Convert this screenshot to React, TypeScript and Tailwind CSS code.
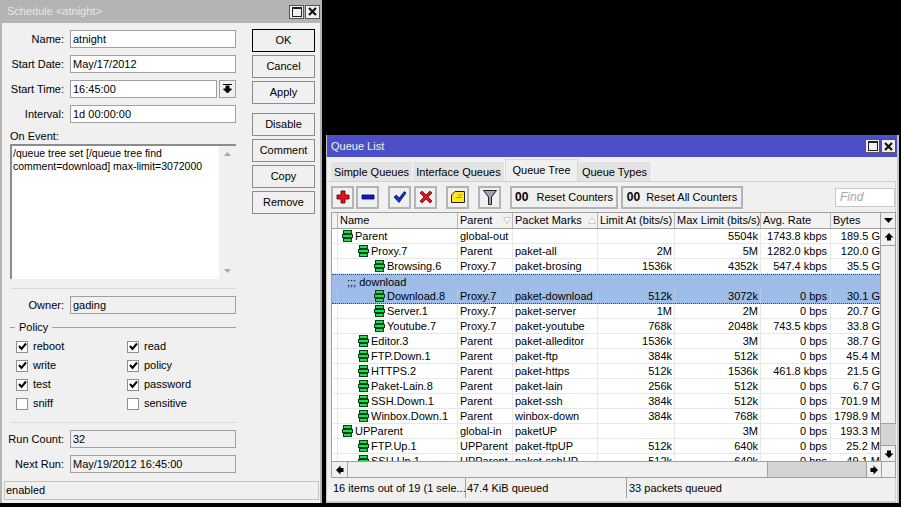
// Winbox-style windows: Schedule dialog on the left, Queue List on the right.
import type { ReactNode } from 'react';

const Arrow = ({ dir }: { dir: 'up' | 'down' | 'left' | 'right' }) => {
  const d = {
    up: 'M5 1 L9.5 5.5 L7 5.5 L7 8.5 L3 8.5 L3 5.5 L.5 5.5 Z',
    down: 'M5 9 L9.5 4.5 L7 4.5 L7 1.5 L3 1.5 L3 4.5 L.5 4.5 Z',
    left: 'M1 5 L5.5 .5 L5.5 3 L8.5 3 L8.5 7 L5.5 7 L5.5 9.5 Z',
    right: 'M9 5 L4.5 .5 L4.5 3 L1.5 3 L1.5 7 L4.5 7 L4.5 9.5 Z',
  }[dir];
  return (
    <svg width="10" height="10" viewBox="0 0 10 10">
      <path d={d} fill="#000" />
    </svg>
  );
};

const WinButtons = () => (
  <div className="flex gap-[1px]">
    <div className="w-[15px] h-[14px] bg-[#f0f0f0] border border-[#555] flex items-center justify-center">
      <div className="w-[10px] h-[10px] border border-[#222] border-t-2" />
    </div>
    <div className="w-[15px] h-[14px] bg-[#f0f0f0] border border-[#555] flex items-center justify-center">
      <svg width="9" height="9" viewBox="0 0 9 9">
        <path d="M1 1 L8 8 M8 1 L1 8" stroke="#111" strokeWidth="2.2" />
      </svg>
    </div>
  </div>
);

const Field = ({ label, value, readOnly, narrow }: { label: string; value: string; readOnly?: boolean; narrow?: boolean }) => (
  <div className="flex items-center h-[18px]">
    <div className="w-[64px] text-right shrink-0 whitespace-nowrap">{label}</div>
    <div className={`ml-[6px] h-full border border-[#a0a0a0] pl-[2px] flex items-center ${narrow ? 'w-[147px]' : 'w-[166px]'} ${readOnly ? 'bg-[#f0f0f0]' : 'bg-white'}`}>
      {value}
    </div>
    {narrow && (
      <div className="ml-[2px] w-[17px] h-full border border-[#a0a0a0] flex items-center justify-center">
        <svg width="9" height="10" viewBox="0 0 9 10">
          <path d="M0 0.5 H9 M3 2 H6 V5 H8.5 L4.5 9 L.5 5 H3 Z" fill="#000" stroke="#000" strokeWidth="1" />
        </svg>
      </div>
    )}
  </div>
);

const SideButton = ({ children, primary }: { children: ReactNode; primary?: boolean }) => (
  <div className={`w-[63px] h-[23px] flex items-center justify-center bg-[#f0f0f0] border ${primary ? 'border-black' : 'border-[#8c8c8c]'}`}>
    {children}
  </div>
);

const Check = ({ label, on }: { label: string; on?: boolean }) => (
  <div className="flex items-center h-[19px] w-[111px]">
    <div className="w-[12px] h-[12px] bg-white border border-[#8e8f8f] flex items-center justify-center">
      {on && (
        <svg width="9" height="9" viewBox="0 0 9 9">
          <path d="M1 4 L3.5 7 L8 1.5" fill="none" stroke="#000" strokeWidth="2" />
        </svg>
      )}
    </div>
    <div className="ml-[5px]">{label}</div>
  </div>
);

const Separator = () => <div className="h-px bg-[#d8d8d8] ml-[11px] w-[225px]" />;

const ScheduleWindow = () => (
  <div className="w-[322px] h-[503px] shrink-0 bg-[#f0f0f0] border-l-2 border-r-2 border-[#b4b4b4] flex flex-col">
    <div className="h-[23px] bg-[#b4b4b4] flex items-center justify-between pl-[5px] shrink-0">
      <span className="text-[#e6e6e6] text-[11px]">Schedule &lt;atnight&gt;</span>
      <WinButtons />
    </div>
    <div className="flex">
      <div className="w-[236px] shrink-0 -ml-[2px]">
        <div className="mt-[7px] flex flex-col gap-[7px]">
          <Field label="Name:" value="atnight" />
          <Field label="Start Date:" value="May/17/2012" />
          <Field label="Start Time:" value="16:45:00" narrow />
          <Field label="Interval:" value="1d 00:00:00" />
        </div>
        <div className="ml-[10px] mt-[6px] h-[15px] leading-[15px]">On Event:</div>
        <div className="ml-[10px] w-[226px] h-[135px] flex bg-white border-t-2 border-l-2 border-[#8c8c8c]">
          <div className="flex-1 pl-[1px] pt-[1px] leading-[13px] text-[10.5px] whitespace-pre">{'/queue tree set [/queue tree find\ncomment=download] max-limit=3072000'}</div>
          <div className="w-[17px] bg-[#f0f0f0] flex flex-col justify-between items-center py-[6px]">
            <svg width="7" height="4" viewBox="0 0 7 4"><path d="M3.5 0 L7 4 H0 Z" fill="#a8a8a8" /></svg>
            <svg width="7" height="4" viewBox="0 0 7 4"><path d="M3.5 4 L7 0 H0 Z" fill="#a8a8a8" /></svg>
          </div>
        </div>
        <div className="mt-[9px]"><Separator /></div>
        <div className="mt-[7px]"><Field label="Owner:" value="gading" readOnly /></div>
        <div className="mt-[6px] h-[14px] flex items-center ml-[10px]">
          <div className="w-[5px] h-px bg-[#a0a0a0]" />
          <div className="ml-[4px]">Policy</div>
          <div className="ml-[4px] flex-1 h-px bg-[#a0a0a0]" />
        </div>
        <div className="mt-[3px] ml-[16px] grid grid-cols-2 w-[222px]">
          <Check label="reboot" on />
          <Check label="read" on />
          <Check label="write" on />
          <Check label="policy" on />
          <Check label="test" on />
          <Check label="password" on />
          <Check label="sniff" />
          <Check label="sensitive" />
        </div>
        <div className="mt-[9px]"><Separator /></div>
        <div className="mt-[7px] flex flex-col gap-[7px]">
          <Field label="Run Count:" value="32" readOnly />
          <Field label="Next Run:" value="May/19/2012 16:45:00" readOnly />
        </div>
      </div>
      <div className="ml-[16px] mt-[6px] flex flex-col gap-[3px]">
        <SideButton primary>OK</SideButton>
        <SideButton>Cancel</SideButton>
        <SideButton>Apply</SideButton>
        <div className="h-[3px]" />
        <SideButton>Disable</SideButton>
        <SideButton>Comment</SideButton>
        <SideButton>Copy</SideButton>
        <SideButton>Remove</SideButton>
      </div>
    </div>
    <div className="mt-[8px] ml-[2px] mr-[1px] h-[19px] border border-[#c4c4c4] flex items-center pl-[1px]">enabled</div>
  </div>
);

const QueueIcon = () => (
  <svg width="11" height="12" viewBox="0 0 11 12" className="shrink-0">
    <g fill="#16e04a" stroke="#0b3d1c" strokeWidth="1">
      <rect x="1.5" y=".5" width="8" height="3" />
      <rect x=".5" y="4.5" width="10" height="3" />
      <rect x="1.5" y="8.5" width="8" height="3" />
    </g>
  </svg>
);

const Tool = ({ children, className }: { children: ReactNode; className: string }) => (
  <div className={`h-[23px] border-2 border-[#b4b4b4] flex items-center justify-center ${className}`}>{children}</div>
);

const Tab = ({ label, active, className }: { label: string; active?: boolean; className: string }) => (
  <div className={`flex items-center justify-center ${className} ${active ? 'h-[22px] bg-[#f0f0f0] border-t border-r border-l border-[#d8d8d8]' : 'h-[19px] pt-[1px] bg-[#e3e3e3] border-r border-[#f8f8f8]'}`}>
    {label}
  </div>
);

type Row = { name: string; level: number; parent: string; marks: string; limit: string; max: string; avg: string; bytes: string; selected?: boolean };

const rows: Row[] = [
  { name: 'Parent', level: 0, parent: 'global-out', marks: '', limit: '', max: '5504k', avg: '1743.8 kbps', bytes: '189.5 G' },
  { name: 'Proxy.7', level: 1, parent: 'Parent', marks: 'paket-all', limit: '2M', max: '5M', avg: '1282.0 kbps', bytes: '120.0 G' },
  { name: 'Browsing.6', level: 2, parent: 'Proxy.7', marks: 'paket-brosing', limit: '1536k', max: '4352k', avg: '547.4 kbps', bytes: '35.5 G' },
  { name: 'Download.8', level: 2, parent: 'Proxy.7', marks: 'paket-download', limit: '512k', max: '3072k', avg: '0 bps', bytes: '30.1 G', selected: true },
  { name: 'Server.1', level: 2, parent: 'Proxy.7', marks: 'paket-server', limit: '1M', max: '2M', avg: '0 bps', bytes: '20.7 G' },
  { name: 'Youtube.7', level: 2, parent: 'Proxy.7', marks: 'paket-youtube', limit: '768k', max: '2048k', avg: '743.5 kbps', bytes: '33.8 G' },
  { name: 'Editor.3', level: 1, parent: 'Parent', marks: 'paket-alleditor', limit: '1536k', max: '3M', avg: '0 bps', bytes: '38.7 G' },
  { name: 'FTP.Down.1', level: 1, parent: 'Parent', marks: 'paket-ftp', limit: '384k', max: '512k', avg: '0 bps', bytes: '45.4 M' },
  { name: 'HTTPS.2', level: 1, parent: 'Parent', marks: 'paket-https', limit: '512k', max: '1536k', avg: '461.8 kbps', bytes: '21.5 G' },
  { name: 'Paket-Lain.8', level: 1, parent: 'Parent', marks: 'paket-lain', limit: '256k', max: '512k', avg: '0 bps', bytes: '6.7 G' },
  { name: 'SSH.Down.1', level: 1, parent: 'Parent', marks: 'paket-ssh', limit: '384k', max: '512k', avg: '0 bps', bytes: '701.9 M' },
  { name: 'Winbox.Down.1', level: 1, parent: 'Parent', marks: 'winbox-down', limit: '384k', max: '768k', avg: '0 bps', bytes: '1798.9 M' },
  { name: 'UPParent', level: 0, parent: 'global-in', marks: 'paketUP', limit: '', max: '3M', avg: '0 bps', bytes: '193.3 M' },
  { name: 'FTP.Up.1', level: 1, parent: 'UPParent', marks: 'paket-ftpUP', limit: '512k', max: '640k', avg: '0 bps', bytes: '25.2 M' },
  { name: 'SSH.Up.1', level: 1, parent: 'UPParent', marks: 'paket-sshUP', limit: '512k', max: '640k', avg: '0 bps', bytes: '49.1 M' },
];

const indent = ['pl-[4px]', 'pl-[20px]', 'pl-[36px]'];

const TableRow = ({ row }: { row: Row }) => {
  const line = row.selected ? 'border-[#b4cbee]' : 'border-[#e8e8e8]';
  const cell = `h-full border-r ${line} flex items-center overflow-hidden whitespace-nowrap`;
  return (
    <div className={`flex h-[15px] shrink-0 ${row.selected ? 'bg-[#9dbde8] border-b border-dotted border-[#444]' : `border-b ${line}`}`}>
      <div className={`w-[6px] ${cell}`} />
      <div className={`w-[120px] ${cell} ${indent[row.level]}`}>
        <QueueIcon />
        <span className="ml-[2px]">{row.name}</span>
      </div>
      <div className={`w-[55px] ${cell} pl-[2px]`}>{row.parent}</div>
      <div className={`w-[85px] ${cell} pl-[2px]`}>{row.marks}</div>
      <div className={`w-[77px] ${cell} justify-end pr-[2px]`}>{row.limit}</div>
      <div className={`w-[86px] ${cell} justify-end pr-[2px]`}>{row.max}</div>
      <div className={`w-[70px] ${cell} justify-end pr-[3px]`}>{row.avg}</div>
      <div className="w-[49px] h-full flex items-center justify-end overflow-hidden whitespace-nowrap">{row.bytes}</div>
    </div>
  );
};

const Head = ({ label, className, sort }: { label: string; className: string; sort?: 'up' | 'down' }) => (
  <div className={`h-full border-r border-[#b8b8b8] flex items-center justify-between pl-[2px] pr-[1px] overflow-hidden whitespace-nowrap ${className}`}>
    <span>{label}</span>
    {sort && (
      <svg width="8" height="7" viewBox="0 0 8 7">
        <path d={sort === 'down' ? 'M.5 .5 H7.5 L4 6.5 Z' : 'M4 .5 L7.5 6.5 H.5 Z'} fill="#fff" stroke="#c8c8c8" />
      </svg>
    )}
  </div>
);

const QueueWindow = () => (
  <div className="mt-[135px] ml-[4px] w-[573px] h-[368px] bg-[#f0f0f0] border-l border-r-2 border-b border-[#c4c4c4] flex flex-col">
    <div className="h-[22px] shrink-0 bg-[#4d4fc6] flex items-center justify-between pl-[4px] pr-[1px] text-[#f0f0f0] text-[11px]">
      <span className="pt-[1px]">Queue List</span>
      <WinButtons />
    </div>
    <div className="flex items-end h-[24px] pl-[4px] shrink-0">
      <Tab label="Simple Queues" className="w-[82px]" />
      <Tab label="Interface Queues" className="w-[92px]" />
      <Tab label="Queue Tree" active className="w-[73px]" />
      <Tab label="Queue Types" className="w-[74px]" />
    </div>
    <div className="flex-1 min-h-0 border-t border-r border-b border-[#d0d0d0] pl-[4px] mr-[1px] flex flex-col">
      <div className="h-[30px] shrink-0 flex items-center">
        <Tool className="w-[23px]">
          <svg width="14" height="14" viewBox="0 0 14 14"><path d="M5 1 H9 V5 H13 V9 H9 V13 H5 V9 H1 V5 H5 Z" fill="#e8101c" stroke="#400" strokeWidth=".8" /></svg>
        </Tool>
        <Tool className="w-[23px] ml-[2px]">
          <svg width="14" height="14" viewBox="0 0 14 14"><path d="M1 5 H13 V9 H1 Z" fill="#1414e0" stroke="#004" strokeWidth=".8" /></svg>
        </Tool>
        <Tool className="w-[23px] ml-[9px]">
          <svg width="14" height="14" viewBox="0 0 14 14"><path d="M1 7 L3.5 5 L6 8 L11.5 1.5 L13 3 L6 12.5 Z" fill="#1430d8" stroke="#002" strokeWidth=".7" /></svg>
        </Tool>
        <Tool className="w-[23px] ml-[3px]">
          <svg width="14" height="14" viewBox="0 0 14 14"><path d="M1 3 L3 1 L7 5 L11 1 L13 3 L9 7 L13 11 L11 13 L7 9 L3 13 L1 11 L5 7 Z" fill="#e8101c" stroke="#400" strokeWidth=".7" /></svg>
        </Tool>
        <Tool className="w-[23px] ml-[9px]">
          <svg width="14" height="12" viewBox="0 0 14 12"><path d="M.5 4 L4 .5 H13.5 V11.5 H.5 Z" fill="#ffe81a" stroke="#222" /><path d="M7 4 H11 M5 6.5 H11" stroke="#a89a10" /></svg>
        </Tool>
        <Tool className="w-[23px] ml-[9px]">
          <svg width="14" height="15" viewBox="0 0 14 15"><path d="M.5 .5 H13.5 L8.5 7 V14.5 H5.5 V7 Z" fill="#9aa4b4" stroke="#222" /></svg>
        </Tool>
        <Tool className="w-[108px] ml-[9px]">
          <b className="mr-[8px] text-[12px]">00</b>Reset Counters
        </Tool>
        <Tool className="w-[122px] ml-[3px]">
          <b className="mr-[6px] text-[12px]">00</b>Reset All Counters
        </Tool>
        <div className="ml-auto w-[60px] h-[19px] bg-white border border-[#c8c8c8] pl-[4px] flex items-center italic text-[#a8a8a8] text-[12px]">Find</div>
      </div>
      <div className="w-[565px] h-[266px] shrink-0 border-t border-l border-r border-[#a0a0a0] flex flex-col">
        <div className="flex-1 min-h-0 flex">
          <div className="w-[548px] shrink-0 flex flex-col overflow-hidden">
            <div className="flex h-[16px] shrink-0 border-b border-[#a0a0a0] bg-[#f2f2f2]">
              <div className="w-[6px] h-full border-r border-[#b8b8b8]" />
              <Head label="Name" className="w-[120px]" />
              <Head label="Parent" className="w-[55px]" sort="down" />
              <Head label="Packet Marks" className="w-[85px]" sort="up" />
              <Head label="Limit At (bits/s)" className="w-[77px]" />
              <Head label="Max Limit (bits/s)" className="w-[86px]" />
              <Head label="Avg. Rate" className="w-[70px]" />
              <div className="w-[49px] h-full pl-[2px] flex items-center">Bytes</div>
            </div>
            <div className="flex-1 min-h-0 bg-white flex flex-col overflow-hidden">
              {rows.map((r, i) => (
                <div key={r.name} className="contents">
                  {i === 3 && (
                    <div className="h-[15px] shrink-0 bg-[#9dbde8] border-t border-dotted border-[#444] pl-[15px] flex items-center">;;; download</div>
                  )}
                  <TableRow row={r} />
                </div>
              ))}
            </div>
          </div>
          <div className="w-[16px] shrink-0 border-l border-[#a0a0a0] flex flex-col">
            <div className="h-[16px] shrink-0 border-b border-[#a0a0a0] flex items-center justify-center">
              <svg width="9" height="5" viewBox="0 0 9 5"><path d="M0 0 H9 L4.5 5 Z" fill="#000" /></svg>
            </div>
            <div className="h-[17px] shrink-0 border-b border-[#a0a0a0] flex items-center justify-center"><Arrow dir="up" /></div>
            <div className="h-[178px] shrink-0 border-b border-[#a0a0a0]" />
            <div className="flex-1 bg-[#d4d4d4]" />
            <div className="h-[16px] shrink-0 border-t border-[#a0a0a0] flex items-center justify-center"><Arrow dir="down" /></div>
          </div>
        </div>
        <div className="h-[17px] shrink-0 border-t border-b border-[#a0a0a0] flex">
          <div className="w-[16px] border-r border-[#a0a0a0] flex items-center justify-center"><Arrow dir="left" /></div>
          <div className="w-[420px] border-r border-[#a0a0a0]" />
          <div className="w-[98px] bg-[#d4d4d4]" />
          <div className="w-[16px] border-l border-r border-[#a0a0a0] flex items-center justify-center"><Arrow dir="right" /></div>
        </div>
      </div>
      <div className="h-[20px] shrink-0 flex items-center">
        <div className="w-[135px] h-full flex items-center pl-[2px] border-r border-[#a0a0a0] whitespace-nowrap">16 items out of 19 (1 sele...</div>
        <div className="w-[161px] h-full flex items-center pl-[1px] border-r border-[#a0a0a0]">47.4 KiB queued</div>
        <div className="pl-[2px]">33 packets queued</div>
      </div>
    </div>
  </div>
);

export default function App() {
  return (
    <div className="w-[901px] h-[507px] bg-black flex items-start overflow-hidden text-black text-[11px] font-['Liberation_Sans',Arial,sans-serif]">
      <ScheduleWindow />
      <QueueWindow />
    </div>
  );
}
